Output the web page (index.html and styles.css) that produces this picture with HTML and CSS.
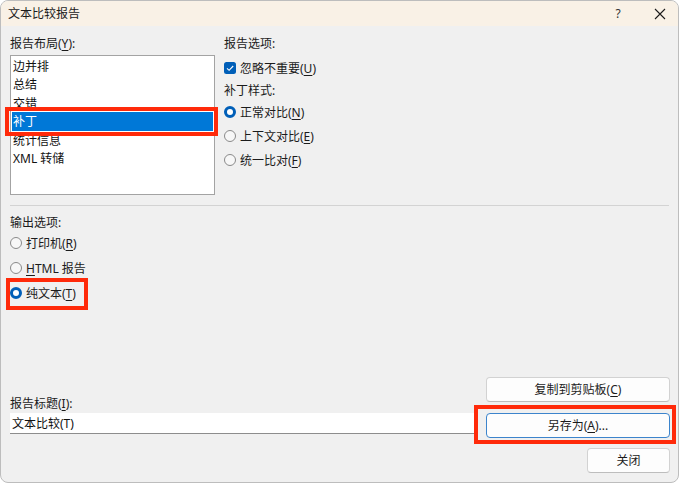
FILE: index.html
```html
<!DOCTYPE html>
<html lang="zh-CN">
<head>
<meta charset="utf-8">
<title>文本比较报告</title>
<link rel="stylesheet" href="styles.css">
</head>
<body>
<div class="window">
  <div class="titlebar">
    <span class="title">文本比较报告</span>
    <div class="caption-btns">
      <span class="cap help">?</span>
      <span class="cap close">
        <svg width="12" height="12" viewBox="0 0 12 12"><path d="M1 1 L11 11 M11 1 L1 11" stroke="#1b1b1b" stroke-width="1.1" fill="none"/></svg>
      </span>
    </div>
  </div>
  <div class="body">
    <div class="top">
      <div class="col-left">
        <div class="label">报告布局(<u>Y</u>):</div>
        <ul class="listbox">
          <li>边并排</li>
          <li>总结</li>
          <li>交错</li>
          <li class="selected">补丁<span class="callout callout-list"></span></li>
          <li>统计信息</li>
          <li>XML 转储</li>
        </ul>
      </div>
      <div class="col-right">
        <div class="label">报告选项:</div>
        <div class="row check-row">
          <svg class="box" width="12" height="12" viewBox="0 0 12 12"><rect x="0" y="0" width="12" height="12" rx="2.5" fill="#005fb8"/><path d="M3 6.3 L5.1 8.3 L9.2 4" stroke="#fff" stroke-width="1.1" fill="none"/></svg>
          <span>忽略不重要(<u>U</u>)</span>
        </div>
        <div class="label label-sub">补丁样式:</div>
        <div class="row r1"><span class="radio on"></span><span>正常对比(<u>N</u>)</span></div>
        <div class="row r2"><span class="radio"></span><span>上下文对比(<u>E</u>)</span></div>
        <div class="row r2"><span class="radio"></span><span>统一比对(<u>F</u>)</span></div>
      </div>
    </div>
    <div class="sep"></div>
    <div class="output">
      <div class="label out-label">输出选项:</div>
      <div class="row o1"><span class="radio"></span><span>打印机(<u>R</u>)</span></div>
      <div class="row o2"><span class="radio"></span><span><u>H</u>TML 报告</span></div>
      <div class="row o2 boxed"><span class="radio on"></span><span>纯文本(<u>T</u>)</span><span class="callout callout-radio"></span></div>
    </div>
    <div class="bottom">
      <div class="bottom-left">
        <div class="label">报告标题(<u>I</u>):</div>
        <div class="textfield">文本比较(T)</div>
      </div>
      <div class="buttons">
        <div class="btn">复制到剪贴板(<u>C</u>)</div>
        <div class="btn default">另存为(<u>A</u>)...<span class="callout callout-btn"></span></div>
        <div class="btn close-btn">关闭</div>
      </div>
    </div>
  </div>
</div>
</body>
</html>
```
FILE: styles.css
```css
html, body {
  margin: 0;
  padding: 0;
  background: #ffffff;
}
body {
  width: 680px;
  height: 484px;
  font-family: "Noto Sans", "Noto Sans CJK SC", sans-serif;
  font-size: 12px;
  line-height: 18px;
  color: #1b1b1b;
  overflow: hidden;
}
u {
  text-decoration: underline;
  text-underline-offset: 2px;
  text-decoration-thickness: 1px;
}
.window {
  width: 677px;
  height: 481px;
  border: 1px solid #bdbdbd;
  border-radius: 8px;
  background: #f0f0f0;
  display: flex;
  flex-direction: column;
  overflow: hidden;
}
.titlebar {
  height: 25px;
  flex: none;
  background: #f9f1e6;
  display: flex;
  align-items: center;
  padding-left: 7px;
}
.title {
  flex: 1;
  color: #1b1b1b;
}
.caption-btns {
  display: flex;
  gap: 6px;
  height: 25px;
}
.cap {
  width: 36px;
  display: flex;
  align-items: center;
  justify-content: center;
}
.help {
  font-size: 12px;
  color: #333;
}
.body {
  flex: 1;
  display: flex;
  flex-direction: column;
  padding: 8px 7px 9px 9px;
}
.top {
  display: flex;
  gap: 9px;
}
.label {
  padding-top: 1px;
  height: 17px;
}
.col-left {
  width: 205px;
}
.listbox {
  list-style: none;
  margin: 3px 0 0;
  padding: 1px;
  height: 140px;
  box-sizing: border-box;
  border: 1px solid #a3a3a3;
  background: #ffffff;
}
.listbox li {
  height: 18.4px;
  line-height: 19.4px;
  padding-left: 1px;
  color: #111;
}
.listbox li.selected {
  position: relative;
  background: #0078d7;
  color: #ffffff;
}
.row {
  display: flex;
  align-items: center;
  gap: 4px;
  height: 18px;
}
.row > span:not(.radio):not(.callout) {
  padding-top: 1px;
}
.check-row { margin-top: 7px; }
.label-sub { margin-top: 4px; }
.r1 { margin-top: 4px; }
.r2 { margin-top: 6px; }
.box { flex: none; }
.radio {
  flex: none;
  width: 12px;
  height: 12px;
  box-sizing: border-box;
  border-radius: 50%;
  border: 1px solid #8a8a8a;
  background: #f7f7f7;
}
.radio.on {
  border: 3.5px solid #005fb8;
  background: #ffffff;
}
.sep {
  margin-top: 10px;
  margin-right: 2px;
  height: 1px;
  background: #d3d3d3;
}
.out-label { margin-top: 7px; }
.o1 { margin-top: 3px; }
.o2 { margin-top: 7px; }
.boxed {
  position: relative;
  width: max-content;
}
.callout {
  position: absolute;
  border: 4px solid #ff2a0a;
  pointer-events: none;
}
.callout-list {
  left: -7px;
  right: -5px;
  top: -5px;
  bottom: -5px;
}
.callout-radio {
  left: -4px;
  right: -12px;
  top: -6px;
  bottom: -8px;
}
.bottom {
  margin-top: auto;
  display: grid;
  grid-template-columns: 466px 184px;
  column-gap: 10px;
}
.bottom-left {
  padding-top: 17px;
}
.textfield {
  margin-top: 1px;
  height: 21px;
  box-sizing: border-box;
  background: #ffffff;
  border-bottom: 1px solid #8d8d8d;
  padding-left: 2px;
  line-height: 21px;
  color: #111;
}
.buttons {
  display: flex;
  flex-direction: column;
}
.btn {
  position: relative;
  height: 25px;
  box-sizing: border-box;
  border: 1px solid #d2d2d2;
  border-bottom-color: #bdbdbd;
  border-radius: 4px;
  background: #fdfdfd;
  display: flex;
  align-items: center;
  justify-content: center;
  padding-top: 1px;
  color: #1b1b1b;
}
.btn.default {
  margin-top: 11px;
  border: 1px solid #3c84cc;
}
.close-btn {
  margin-top: 10px;
  width: 83px;
  align-self: flex-end;
}
.callout-btn {
  left: -13px;
  right: -7px;
  top: -9px;
  bottom: -7px;
}
```
